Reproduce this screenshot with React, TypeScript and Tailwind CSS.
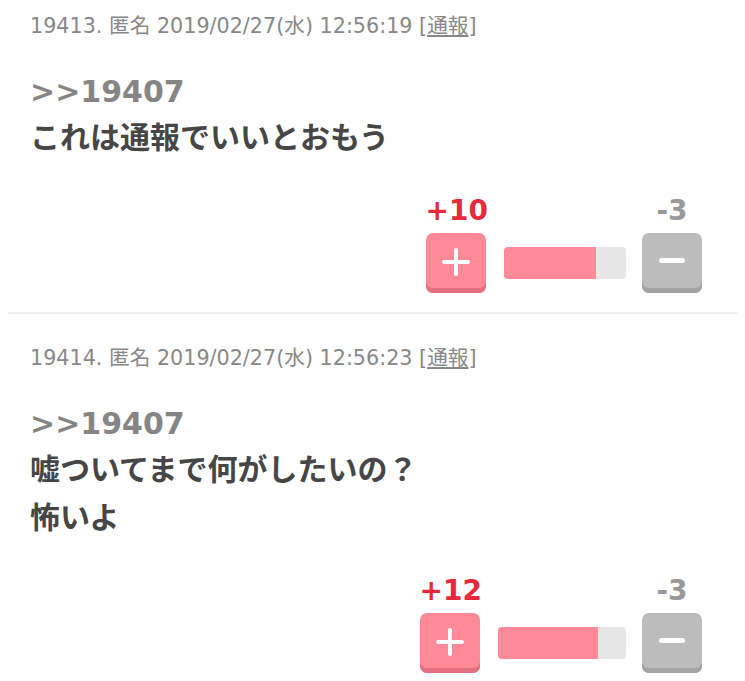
type Post = {
  no: number;
  date: string;
  anchor: string;
  lines: string[];
  plus: number;
  minus: number;
  barWidth: string;
  fillWidth: string;
};

const posts: Post[] = [
  {
    no: 19413,
    date: "2019/02/27(水) 12:56:19",
    anchor: ">>19407",
    lines: ["これは通報でいいとおもう"],
    plus: 10,
    minus: 3,
    barWidth: "w-[122px]",
    fillWidth: "w-[92px]",
  },
  {
    no: 19414,
    date: "2019/02/27(水) 12:56:23",
    anchor: ">>19407",
    lines: ["嘘ついてまで何がしたいの？", "怖いよ"],
    plus: 12,
    minus: 3,
    barWidth: "w-[128px]",
    fillWidth: "w-[100px]",
  },
];

const jp = "font-['DejaVu_Sans','Noto_Sans_CJK_JP',sans-serif]";

function VoteButton({ kind }: { kind: "plus" | "minus" }) {
  const plus = kind === "plus";
  return (
    <button
      className={`relative block w-[60px] h-[60px] rounded-[7px] ${
        plus ? "bg-[#ff8a97] shadow-[inset_0_-5px_0_#e27080]" : "bg-[#bcbcbc] shadow-[inset_0_-5px_0_#a3a3a3]"
      }`}
    >
      {plus ? (
        <>
          <span className="absolute left-[16px] top-[27px] w-[28px] h-[4px] rounded-sm bg-white" />
          <span className="absolute left-[28px] top-[15px] w-[4px] h-[28px] rounded-sm bg-white" />
        </>
      ) : (
        <span className="absolute left-[17px] top-[25px] w-[26px] h-[5px] rounded-sm bg-white" />
      )}
    </button>
  );
}

function PostItem({ post, last }: { post: Post; last: boolean }) {
  return (
    <div className={`px-[22px] pt-[32px] pb-[19px] ${last ? "" : "border-b-2 border-[#eeeeee]"}`}>
      <div className={`${jp} text-[20.7px] leading-[24px] text-[#888888]`}>
        {post.no}. 匿名 {post.date} [<span className="underline">通報</span>]
      </div>
      <div className={`${jp} mt-[34px] text-[30px] leading-[40px] font-bold text-[#858585]`}>{post.anchor}</div>
      <div className={`${jp} mt-[2px] text-[30px] leading-[48px] font-bold text-[#464646]`}>
        {post.lines.map((l) => (
          <div key={l}>{l}</div>
        ))}
      </div>
      <div className="mt-[35px] flex justify-end pr-[13px]">
        <div className="flex flex-col">
          <div className="text-[28px] leading-[28px] font-bold text-[#e8283c] font-['DejaVu_Sans',sans-serif]">
            +{post.plus}
          </div>
          <div className="mt-[8px]">
            <VoteButton kind="plus" />
          </div>
        </div>
        <div className={`ml-[16px] mt-[50px] h-[32px] ${post.barWidth} rounded-[4px] bg-[#e6e6e6] overflow-hidden`}>
          <div className={`h-full ${post.fillWidth} bg-[#ff8b98]`} />
        </div>
        <div className="ml-[16px] flex flex-col items-center">
          <div className="text-[28px] leading-[28px] font-bold text-[#999999] font-['DejaVu_Sans',sans-serif]">
            -{post.minus}
          </div>
          <div className="mt-[8px]">
            <VoteButton kind="minus" />
          </div>
        </div>
      </div>
    </div>
  );
}

export default function App() {
  return (
    <div className="min-h-screen bg-white overflow-hidden">
      <div className="mx-[8px] -mt-[18px]">
        {posts.map((p, i) => (
          <PostItem key={p.no} post={p} last={i === posts.length - 1} />
        ))}
      </div>
    </div>
  );
}
